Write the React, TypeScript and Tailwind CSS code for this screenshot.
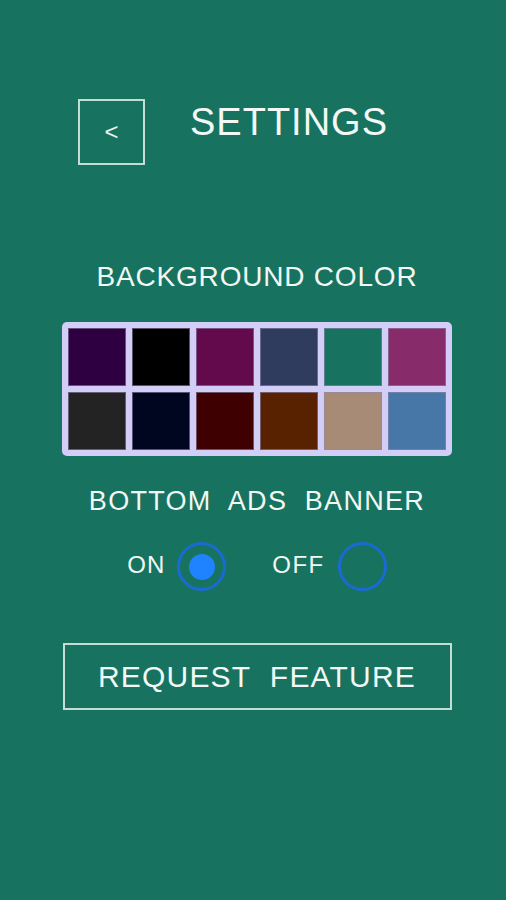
import React, { useState } from "react";

const colors = [
  "#2e0042",
  "#000000",
  "#630a4c",
  "#2f3c5e",
  "#17735f",
  "#882b6b",
  "#232323",
  "#00061f",
  "#3e0000",
  "#582200",
  "#a88b77",
  "#4677a6",
];

const Radio = ({ checked }: { checked: boolean }) => (
  <div className="w-[49px] h-[49px] rounded-full border-[3px] border-[#1a6ad4] flex items-center justify-center">
    {checked && <div className="w-[26px] h-[26px] rounded-full bg-[#1f82ff]" />}
  </div>
);

const App = () => {
  const [adsOn, setAdsOn] = useState(true);

  return (
    <section
      className="min-h-[900px] w-full bg-[#17735f] text-[#f2f8f5] flex flex-col"
      style={{ fontFamily: '"Liberation Sans", Arial, sans-serif' }}
    >
      {/* header */}
      <div className="flex items-start pl-[78px] pt-[99px]">
        <button className="w-[67px] h-[66px] border-2 border-[#c6ddd6] flex items-center justify-center text-[24px] leading-none text-[#e8f2ee]">
          &lt;
        </button>
        <h1 className="ml-[45px] mt-[4px] text-[38px] leading-none tracking-[1px]">
          SETTINGS
        </h1>
      </div>

      <div className="flex flex-col items-center pl-[8px]">
        <p className="mt-[98px] text-[28px] leading-none tracking-[0.8px]">
          BACKGROUND COLOR
        </p>

        <div className="mt-[31px] grid grid-cols-6 gap-[6px] p-[6px] rounded-[5px] bg-[#d2cef7]">
          {colors.map((c) => (
            <div
              key={c}
              className="w-[58px] h-[58px] border border-[#8d89aa]/60 cursor-pointer"
              style={{ backgroundColor: c }}
            />
          ))}
        </div>

        <p className="mt-[32px] text-[27px] leading-none tracking-[1.3px] whitespace-pre">
          {"BOTTOM  ADS  BANNER"}
        </p>

        <div className="mt-[27px] flex items-center">
          <button
            className="flex items-center gap-[12px]"
            onClick={() => setAdsOn(true)}
          >
            <span className="text-[24px] leading-none tracking-[1px] -mt-[4px]">ON</span>
            <Radio checked={adsOn} />
          </button>
          <button
            className="ml-[46px] flex items-center gap-[13px]"
            onClick={() => setAdsOn(false)}
          >
            <span className="text-[24px] leading-none tracking-[1.5px] -mt-[4px]">OFF</span>
            <Radio checked={!adsOn} />
          </button>
        </div>

        <button className="mt-[52px] w-[389px] h-[67px] border-2 border-[#c6ddd6] flex items-center justify-center">
          <span className="text-[30px] leading-none tracking-[1.2px] whitespace-pre">
            {"REQUEST  FEATURE"}
          </span>
        </button>
      </div>
    </section>
  );
};

export default App;
